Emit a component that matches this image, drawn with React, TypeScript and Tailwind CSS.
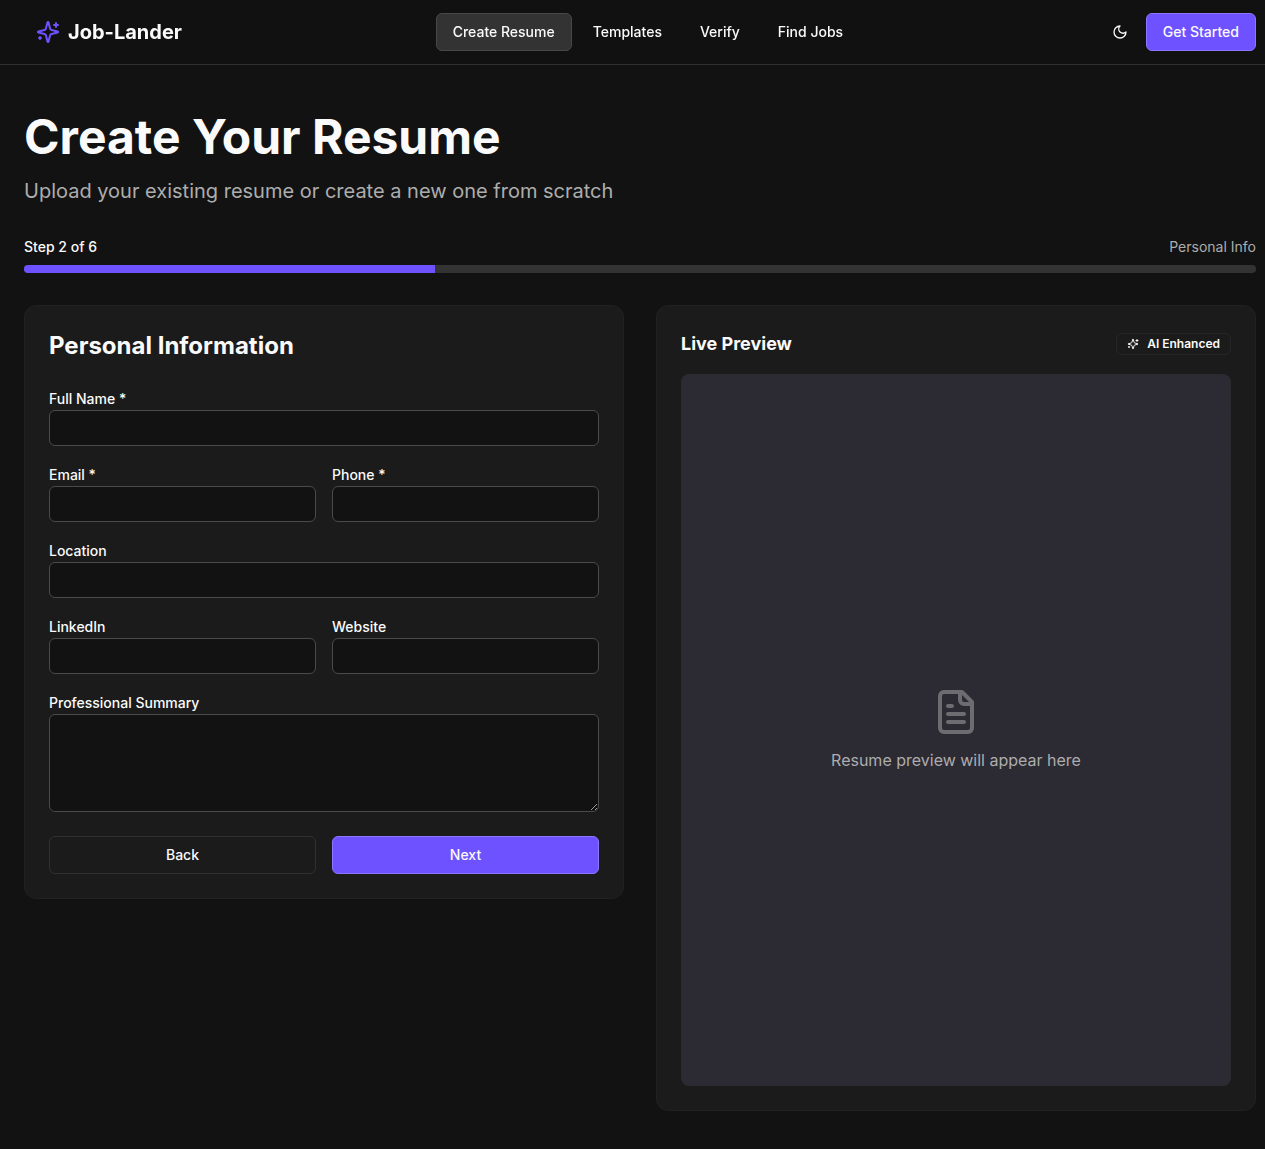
import React from "react";

type IconProps = { className?: string };

function Icon({ className, children }: IconProps & { children: React.ReactNode }) {
  return (
    <svg
      viewBox="0 0 24 24"
      fill="none"
      stroke="currentColor"
      strokeWidth={2}
      strokeLinecap="round"
      strokeLinejoin="round"
      aria-hidden="true"
      className={className}
    >
      {children}
    </svg>
  );
}

function SparklesIcon({ className }: IconProps) {
  return (
    <Icon className={className}>
      <path d="M9.937 15.5A2 2 0 0 0 8.5 14.063l-6.135-1.582a.5.5 0 0 1 0-.962L8.5 9.936A2 2 0 0 0 9.937 8.5l1.582-6.135a.5.5 0 0 1 .963 0L14.063 8.5A2 2 0 0 0 15.5 9.937l6.135 1.581a.5.5 0 0 1 0 .964L15.5 14.063a2 2 0 0 0-1.437 1.437l-1.582 6.135a.5.5 0 0 1-.963 0z" />
      <path d="M20 3v4" />
      <path d="M22 5h-4" />
      <path d="M4 17v2" />
      <path d="M5 18H3" />
    </Icon>
  );
}

function MoonIcon({ className }: IconProps) {
  return (
    <Icon className={className}>
      <path d="M12 3a6 6 0 0 0 9 9 9 9 0 1 1-9-9Z" />
    </Icon>
  );
}

function FileTextIcon({ className }: IconProps) {
  return (
    <Icon className={className}>
      <path d="M15 2H6a2 2 0 0 0-2 2v16a2 2 0 0 0 2 2h12a2 2 0 0 0 2-2V7Z" />
      <path d="M14 2v4a2 2 0 0 0 2 2h4" />
      <path d="M10 9H8" />
      <path d="M16 13H8" />
      <path d="M16 17H8" />
    </Icon>
  );
}

const navItems = [
  { label: "Create Resume", href: "#create", active: true },
  { label: "Templates", href: "#templates", active: false },
  { label: "Verify", href: "#verify", active: false },
  { label: "Find Jobs", href: "#jobs", active: false },
];

function Header() {
  return (
    <header className="sticky top-0 z-50 border-b border-[#2f2f2f] bg-[#121212]/95 backdrop-blur">
      <div className="flex h-16 items-center justify-between pr-[9px] pl-6">
        <a href="#home" className="flex items-center gap-2 px-3">
          <SparklesIcon className="size-6 text-[#6f52ff]" />
          <span className="text-xl font-bold">Job-Lander</span>
        </a>
        <nav className="flex items-center gap-1">
          {navItems.map((item) => (
            <a
              key={item.label}
              href={item.href}
              aria-current={item.active ? "page" : undefined}
              className={
                item.active
                  ? "rounded-md border border-[#484848] bg-[#333333] px-4 py-2 text-sm font-medium"
                  : "rounded-md border border-transparent px-4 py-2 text-sm font-medium"
              }
            >
              {item.label}
            </a>
          ))}
        </nav>
        <div className="flex items-center gap-2">
          <button type="button" aria-label="Toggle theme" className="flex size-9 items-center justify-center rounded-md">
            <MoonIcon className="size-4" />
          </button>
          <button
            type="button"
            className="rounded-md border border-[#8c75ff] bg-[#6f52ff] px-4 py-2 text-sm font-medium"
          >
            Get Started
          </button>
        </div>
      </div>
    </header>
  );
}

function Field({ id, label, type = "text" }: { id: string; label: string; type?: string }) {
  return (
    <div>
      <label htmlFor={id} className="text-sm font-medium">
        {label}
      </label>
      <input
        id={id}
        name={id}
        type={type}
        className="block h-9 w-full rounded-md border border-[#4a4a4a] bg-[#121212] px-3 text-sm outline-none"
      />
    </div>
  );
}

function PersonalInfoForm() {
  return (
    <section className="rounded-xl border border-[#212121] bg-[#1b1b1b] p-6">
      <h2 className="mb-6 text-2xl font-bold">Personal Information</h2>
      <form onSubmit={(e) => e.preventDefault()}>
        <div className="flex flex-col gap-4">
          <Field id="fullName" label="Full Name *" />
          <div className="grid grid-cols-2 gap-4">
            <Field id="email" label="Email *" type="email" />
            <Field id="phone" label="Phone *" type="tel" />
          </div>
          <Field id="location" label="Location" />
          <div className="grid grid-cols-2 gap-4">
            <Field id="linkedin" label="LinkedIn" />
            <Field id="website" label="Website" />
          </div>
          <div>
            <label htmlFor="summary" className="text-sm font-medium">
              Professional Summary
            </label>
            <textarea
              id="summary"
              name="summary"
              rows={4}
              className="block w-full resize-y rounded-md border border-[#4a4a4a] bg-[#121212] px-3 py-2 text-sm outline-none"
            />
          </div>
        </div>
        <div className="mt-6 grid grid-cols-2 gap-4">
          <button type="button" className="rounded-md border border-[#303030] px-4 py-2 text-sm font-medium">
            Back
          </button>
          <button
            type="submit"
            className="rounded-md border border-[#8c75ff] bg-[#6f52ff] px-4 py-2 text-sm font-medium"
          >
            Next
          </button>
        </div>
      </form>
    </section>
  );
}

function LivePreview() {
  return (
    <section className="rounded-xl border border-[#212121] bg-[#1b1b1b] p-6">
      <div className="mb-4 flex items-center justify-between">
        <h3 className="text-lg leading-7 font-bold">Live Preview</h3>
        <span className="flex items-center gap-2 rounded-md border border-[#262626] px-2.5 py-0.5 text-xs font-semibold">
          <SparklesIcon className="size-3" />
          AI Enhanced
        </span>
      </div>
      <div className="flex aspect-[8.5/11] flex-col items-center justify-center gap-3 rounded-lg border border-dashed border-[#2b2b2b] bg-[#2c2a33] text-[#adadad]">
        <FileTextIcon className="size-12 opacity-50" />
        <p>Resume preview will appear here</p>
      </div>
    </section>
  );
}

export default function App() {
  const step = 2;
  const total = 6;
  return (
    <div className="min-h-screen bg-[#121212] font-['Inter',sans-serif] text-[#fafafa]">
      <Header />
      <main className="pt-12 pr-[9px] pb-[38px] pl-6">
        <h1 className="text-5xl font-bold">Create Your Resume</h1>
        <p className="mt-4 text-xl text-[#adadad]">Upload your existing resume or create a new one from scratch</p>
        <div className="mt-8 flex items-center justify-between text-sm">
          <span className="font-medium">Step {step} of {total}</span>
          <span className="text-[#adadad]">Personal Info</span>
        </div>
        <div
          role="progressbar"
          aria-label="Resume progress"
          aria-valuemin={0}
          aria-valuemax={total}
          aria-valuenow={step}
          className="mt-2 h-2 overflow-hidden rounded-full bg-[#333333]"
        >
          <div className="h-full bg-[#6f52ff]" style={{ width: `${(step / total) * 100}%` }} />
        </div>
        <div className="mt-8 grid grid-cols-2 items-start gap-8">
          <PersonalInfoForm />
          <LivePreview />
        </div>
      </main>
    </div>
  );
}
